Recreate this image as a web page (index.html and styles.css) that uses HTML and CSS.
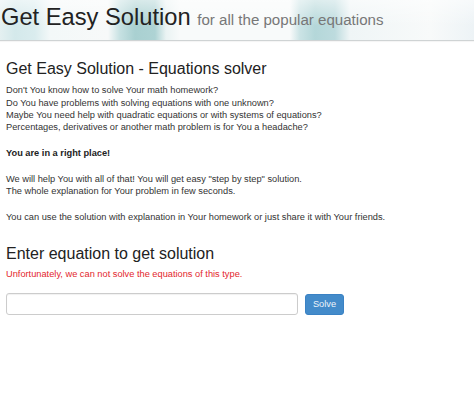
FILE: index.html
```html
<!DOCTYPE html>
<html lang="en">
<head>
  <meta charset="UTF-8">
  <title>Get Easy Solution</title>
  <link rel="stylesheet" href="styles.css">
</head>
<body>

  <div class="top-bar">
    <h1 class="brand">Get Easy Solution <small>for all the popular equations</small></h1>
  </div>

  <div class="content">
    <h2>Get Easy Solution - Equations solver</h2>
    <p>Don't You know how to solve Your math homework?<br>
    Do You have problems with solving equations with one unknown?<br>
    Maybe You need help with quadratic equations or with systems of equations?<br>
    Percentages, derivatives or another math problem is for You a headache?</p>
    <p><b>You are in a right place!</b></p>
    <p>We will help You with all of that! You will get easy "step by step" solution.<br>
    The whole explanation for Your problem in few seconds.</p>
    <p>You can use the solution with explanation in Your homework or just share it with Your friends.</p>

    <h2 class="enter-title">Enter equation to get solution</h2>
    <div class="error-msg">Unfortunately, we can not solve the equations of this type.</div>

    <form class="solve-form" onsubmit="return false">
      <input type="text" class="equation-input">
      <button type="submit" class="solve-btn">Solve</button>
    </form>
  </div>

</body>
</html>
```

FILE: styles.css
```css
body {
  margin: 0;
  font-family: "Liberation Sans", Arial, sans-serif;
  color: #333;
  background: #fff;
}
.top-bar {
  height: 40px;
  border-bottom: 1px solid #cfd3d4;
  box-shadow: 0 1px 1px rgba(0, 0, 0, 0.04);
  background:
    linear-gradient(to bottom, rgba(255, 255, 255, 0.55), rgba(255, 255, 255, 0) 65%),
    linear-gradient(to right, #e4f0f1 0, #d4e9eb 15px, #daecee 35px, #f3f8f8 50px,
      #f7f9f9 108px, #c6e1e2 120px, #a9d0d1 135px, #aed3d4 155px, #eaf3f3 166px,
      #f8fafa 180px, #f8fafa 290px, #cbe3e5 300px, #b4d7d9 315px, #bddbde 335px,
      #eff5f6 350px, #f8fafa 430px, #edf3f6 474px);
}
.brand {
  margin: 0;
  padding-left: 1px;
  font-size: 23.7px;
  font-weight: normal;
  line-height: 34px;
  color: #222;
  white-space: nowrap;
}
.brand small {
  font-size: 15.1px;
  color: #777;
}
.content {
  padding: 0 6px;
}
h2 {
  margin: 19px 0 0;
  font-size: 16px;
  font-weight: normal;
  line-height: 18px;
  color: #222;
}
p {
  margin: 13.6px 0 0;
  font-size: 9.25px;
  line-height: 12.3px;
}
h2 + p {
  margin-top: 6.4px;
}
b {
  color: #222;
}
.enter-title {
  margin-top: 21.4px;
}
.error-msg {
  margin-top: 5px;
  font-size: 9.25px;
  line-height: 12.3px;
  color: #e3262d;
}
.solve-form {
  display: flex;
  align-items: center;
  gap: 7px;
  margin-top: 13.2px;
}
.equation-input {
  box-sizing: border-box;
  width: 292px;
  height: 22px;
  margin: 0;
  border: 1px solid #ccc;
  border-radius: 3px;
  box-shadow: inset 0 1px 1px rgba(0, 0, 0, 0.06);
  background: #fff;
}
.solve-btn {
  box-sizing: border-box;
  width: 39px;
  height: 21px;
  margin: 0;
  padding: 0;
  border: 1px solid #3a82c4;
  border-radius: 3px;
  background: #438bca;
  color: #eef4fa;
  font-family: "Liberation Sans", Arial, sans-serif;
  font-size: 9.25px;
  cursor: pointer;
}
```
